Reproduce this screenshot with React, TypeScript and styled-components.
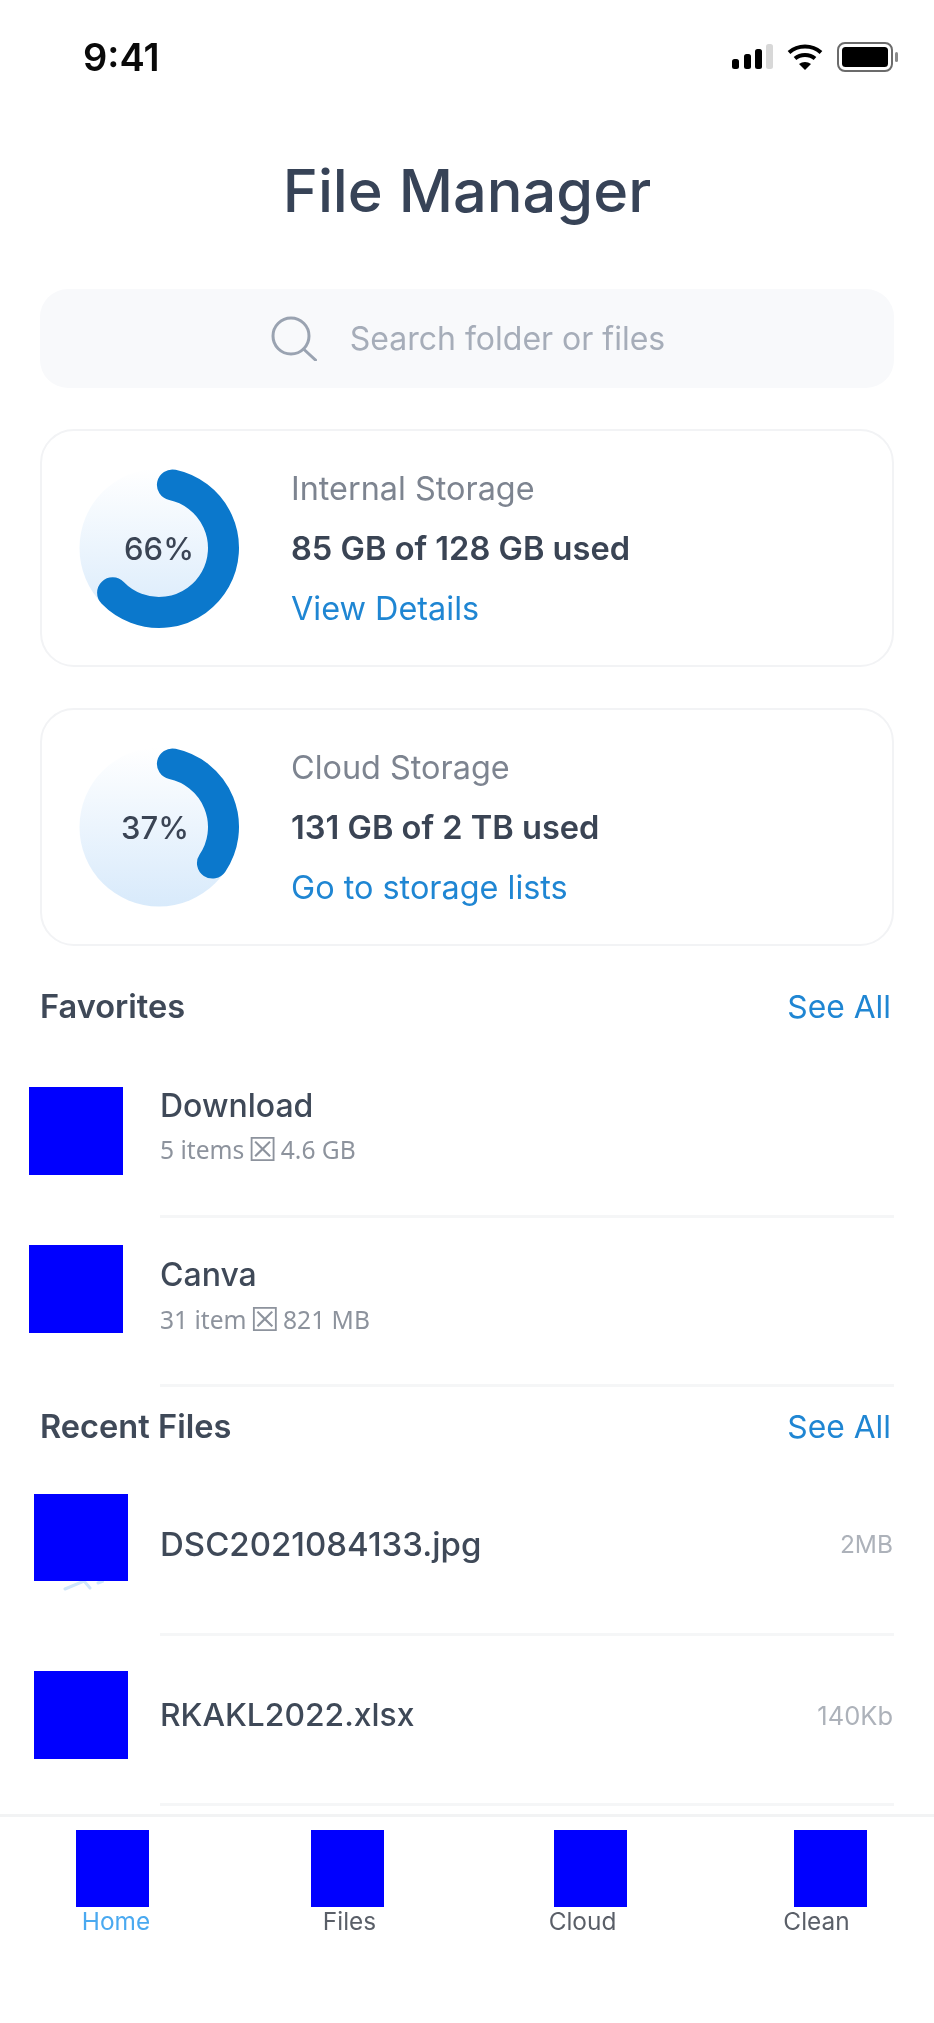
import React from "react";
import styled, { createGlobalStyle, css } from "styled-components";

const Global = createGlobalStyle`
  html, body { margin: 0; padding: 0; background: #fff; }
  body { font-family: "Inter", "Liberation Sans", sans-serif; }
`;

const soft = css`
  filter: blur(0.5px);
`;

const Page = styled.div`
  width: 934px;
  height: 2023px;
  overflow: hidden;
  display: flex;
  flex-direction: column;
  background: #fff;
  color: #374151;
`;

const StatusBar = styled.div`
  height: 110px;
  flex: none;
  display: flex;
  justify-content: space-between;
  align-items: flex-start;
  padding: 34px 35px 0 83px;
  box-sizing: border-box;
`;

const Time = styled.span`
  ${soft}
  font-size: 38px;
  font-weight: 600;
  line-height: 46px;
  color: #0a0a0a;
`;

const StatusIcons = styled.div`
  ${soft}
  display: flex;
  align-items: center;
  gap: 14px;
  padding-top: 8px;
`;

const Content = styled.div`
  flex: 1;
  padding: 0 40px;
  display: flex;
  flex-direction: column;
`;

const Title = styled.h1`
  ${soft}
  margin: 44px 0 63px;
  font-size: 59.5px;
  font-weight: 500;
  line-height: 72px;
  text-align: center;
  color: #374357;
`;

const SearchBox = styled.div`
  height: 99px;
  flex: none;
  border-radius: 28px;
  background: #f8f9fb;
  display: flex;
  align-items: center;
  justify-content: center;
  gap: 33px;
  padding-left: 2px;
  margin-bottom: 41px;
  svg { ${soft} }
`;

const SearchText = styled.span`
  ${soft}
  font-size: 32px;
  color: #a6adb9;
`;

const Card = styled.div`
  height: 238px;
  flex: none;
  box-sizing: border-box;
  border: 2px solid #f2f3f5;
  border-radius: 34px;
  display: flex;
  align-items: center;
  gap: 52px;
  padding-left: 37px;
  margin-bottom: ${(p: { $last?: boolean }) => (p.$last ? "40px" : "41px")};
`;

const Donut = styled.div`
  width: 160px;
  height: 160px;
  flex: none;
  display: grid;
  place-items: center;
`;

const DonutLayer = styled.svg`
  grid-area: 1 / 1;
  overflow: visible;
`;

const DonutValue = styled.span<{ $shift: number }>`
  ${soft}
  grid-area: 1 / 1;
  font-size: 31px;
  font-weight: 500;
  color: #3a4454;
  margin-right: ${(p) => p.$shift}px;
`;

const CardText = styled.div`
  display: flex;
  flex-direction: column;
  gap: 21px;
`;

const CardLabel = styled.span`
  ${soft}
  font-size: 32.4px;
  line-height: 39px;
  color: #7d8490;
`;

const CardValue = styled.span`
  ${soft}
  font-size: 32.6px;
  line-height: 39px;
  font-weight: 600;
  color: #3a4454;
`;

const Link = styled.a`
  ${soft}
  font-size: 32.4px;
  line-height: 39px;
  color: #1f86d3;
`;

const SectionHead = styled.div`
  height: 40px;
  flex: none;
  display: flex;
  justify-content: space-between;
  align-items: center;
  padding-right: 3px;
`;

const SectionTitle = styled.span`
  ${soft}
  font-size: 32.6px;
  font-weight: 600;
  color: #3f4958;
`;

const SeeAll = styled.a`
  ${soft}
  font-size: 31.8px;
  color: #1f86d3;
`;

const Row = styled.div<{ $top: number; $h: number; $bleed: number; $gap: number }>`
  display: flex;
  align-items: center;
  margin: ${(p) => p.$top}px 0 0 ${(p) => -p.$bleed}px;
  height: ${(p) => p.$h}px;
  flex: none;
  gap: ${(p) => p.$gap}px;
`;

const Block = styled.div`
  width: 94px;
  height: 100%;
  flex: none;
  background: #0000ff;
  position: relative;
`;

const BlockTail = styled.svg`
  ${soft}
  position: absolute;
  left: 28px;
  top: 100%;
`;

const Info = styled.div<{ $down?: number; $gap?: number }>`
  display: flex;
  flex-direction: column;
  gap: ${(p) => p.$gap ?? 9}px;
  flex: 1;
  margin-top: ${(p) => p.$down ?? 0}px;
`;

const ItemName = styled.span<{ $size?: number }>`
  ${soft}
  font-size: ${(p) => p.$size ?? 32}px;
  font-weight: 500;
  line-height: 36px;
  color: #3f4958;
`;

const ItemMeta = styled.span`
  ${soft}
  font-family: "Noto Sans", "DejaVu Sans", sans-serif;
  font-size: 24.6px;
  line-height: 32px;
  color: #8d939d;
`;

const MetaMark = styled.span`
  font-size: 33px;
  line-height: 0;
  margin: 0 -3px;
  vertical-align: -2px;
`;

const ItemSize = styled.span<{ $down?: number; $size?: number }>`
  ${soft}
  font-size: ${(p) => p.$size ?? 24.5}px;
  color: #adb2ba;
  margin-right: 1px;
  margin-top: ${(p) => p.$down ?? 0}px;
`;

const Divider = styled.div<{ $top: number }>`
  height: 3px;
  flex: none;
  margin: ${(p) => p.$top}px 0 0 120px;
  background: #f5f6f7;
`;

const Gap = styled.div<{ $h: number }>`
  height: ${(p) => p.$h}px;
  flex: none;
`;

const Nav = styled.nav`
  height: 209px;
  flex: none;
  box-sizing: border-box;
  border-top: 3px solid #f2f3f4;
  padding: 13px 0 0 76px;
  display: flex;
`;

const NavItem = styled.div<{ $left: number }>`
  width: 73px;
  flex: none;
  margin-left: ${(p) => p.$left}px;
  display: flex;
  flex-direction: column;
  align-items: center;
`;

const NavBlock = styled.div`
  width: 73px;
  height: 77px;
  background: #0000ff;
`;

const NavLabel = styled.span<{ $active?: boolean; $shift: number }>`
  ${soft}
  font-size: 24.4px;
  line-height: 28px;
  white-space: nowrap;
  margin-left: ${(p) => p.$shift * 2}px;
  color: ${(p) => (p.$active ? "#4aa9f0" : "#5a5f68")};
`;

const Signal = () => (
  <svg width="42" height="26" viewBox="0 0 42 26">
    <rect x="1" y="15" width="7" height="10" rx="2.5" fill="#000" />
    <rect x="13" y="10" width="7" height="15" rx="2.5" fill="#000" />
    <rect x="24" y="5" width="7" height="20" rx="2.5" fill="#000" />
    <rect x="35" y="0" width="7" height="25" rx="2.5" fill="#d8d8d8" />
  </svg>
);

const Wifi = () => (
  <svg width="36" height="27" viewBox="0 0 36 27" fill="none" stroke="#000" strokeWidth="4">
    <path d="M2 8.5C11 0.5 25 0.5 34 8.5" />
    <path d="M8 14.5C13.5 9.8 22.5 9.8 28 14.5" />
    <path d="M18 26L12 20C15.5 17.2 20.5 17.2 24 20Z" fill="#000" stroke="none" />
  </svg>
);

const Battery = () => (
  <svg width="62" height="30" viewBox="0 0 62 30">
    <rect x="1" y="1" width="54" height="28" rx="7" fill="none" stroke="#6b6b6b" strokeWidth="2" />
    <rect x="5" y="5" width="46" height="20" rx="3.5" fill="#000" />
    <rect x="58" y="10" width="3" height="10" rx="1.5" fill="#8a8a8a" />
  </svg>
);

const SearchGlyph = () => (
  <svg width="46" height="45" viewBox="0 0 46 45" fill="none" stroke="#9aa3b1" strokeWidth="3" strokeLinecap="round">
    <circle cx="20" cy="20" r="18" />
    <path d="M32.5 33L44.5 44" />
  </svg>
);

const arc = (r: number, from: number, to: number) => {
  const pt = (deg: number) => {
    const a = (deg * Math.PI) / 180;
    return `${(80 + r * Math.sin(a)).toFixed(2)} ${(80 - r * Math.cos(a)).toFixed(2)}`;
  };
  return `M${pt(from)}A${r} ${r} 0 ${to - from > 180 ? 1 : 0} 1 ${pt(to)}`;
};

const Ring = ({ id, end }: { id: string; end: number }) => (
  <DonutLayer width="160" height="160" viewBox="0 0 160 160">
    <defs>
      <linearGradient id={id} x1="0" y1="0" x2="0" y2="1">
        <stop offset="0" stopColor="#ffffff" />
        <stop offset="1" stopColor="#d8eafb" />
      </linearGradient>
    </defs>
    <circle cx="80" cy="80" r="79.5" fill={`url(#${id})`} />
    <path d={arc(64.5, 12, end)} fill="none" stroke="#0b78cc" strokeWidth="31" strokeLinecap="round" />
  </DonutLayer>
);

const StorageCard = (p: { id: string; end: number; pct: string; shift: number; label: string; value: string; link: string; last?: boolean }) => (
  <Card $last={p.last}>
    <Donut>
      <Ring id={p.id} end={p.end} />
      <DonutValue $shift={p.shift}>{p.pct}</DonutValue>
    </Donut>
    <CardText>
      <CardLabel>{p.label}</CardLabel>
      <CardValue>{p.value}</CardValue>
      <Link>{p.link}</Link>
    </CardText>
  </Card>
);

const navItems = [
  { label: "Home", left: 0, shift: 3.5, active: true },
  { label: "Files", left: 162, shift: 2 },
  { label: "Cloud", left: 170, shift: -8 },
  { label: "Clean", left: 167, shift: -14 },
];

export default function App() {
  return (
    <Page>
      <Global />
      <StatusBar>
        <Time>9:41</Time>
        <StatusIcons>
          <Signal />
          <Wifi />
          <Battery />
        </StatusIcons>
      </StatusBar>
      <Content>
        <Title>File Manager</Title>
        <SearchBox>
          <SearchGlyph />
          <SearchText>Search folder or files</SearchText>
        </SearchBox>
        <StorageCard id="g1" end={226} pct="66%" shift={0} label="Internal Storage" value="85 GB of 128 GB used" link="View Details" />
        <StorageCard id="g2" end={124} pct="37%" shift={8} label="Cloud Storage" value="131 GB of 2 TB used" link="Go to storage lists" last />
        <SectionHead>
          <SectionTitle>Favorites</SectionTitle>
          <SeeAll>See All</SeeAll>
        </SectionHead>
        <Row $top={61} $h={88} $bleed={11} $gap={37}>
          <Block />
          <Info $down={-8} $gap={10}>
            <ItemName>Download</ItemName>
            <ItemMeta>5 items <MetaMark>☒</MetaMark> 4.6 GB</ItemMeta>
          </Info>
        </Row>
        <Divider $top={40} />
        <Row $top={27} $h={88} $bleed={11} $gap={37}>
          <Block />
          <Info $down={15} $gap={11}>
            <ItemName>Canva</ItemName>
            <ItemMeta>31 item <MetaMark>☒</MetaMark> 821 MB</ItemMeta>
          </Info>
        </Row>
        <Divider $top={51} />
        <Gap $h={19} />
        <SectionHead>
          <SectionTitle>Recent Files</SectionTitle>
          <SeeAll>See All</SeeAll>
        </SectionHead>
        <Row $top={48} $h={87} $bleed={6} $gap={32}>
          <Block>
            <BlockTail width="42" height="10" viewBox="0 0 42 10" fill="none" stroke="#cfe6fa" strokeWidth="3" strokeLinecap="round">
              <path d="M3 8L22 0" />
              <path d="M22 0L28 7" />
              <path d="M36 2L41 0" />
            </BlockTail>
          </Block>
          <Info $down={12}>
            <ItemName $size={33}>DSC2021084133.jpg</ItemName>
          </Info>
          <ItemSize $down={12}>2MB</ItemSize>
        </Row>
        <Divider $top={52} />
        <Row $top={35} $h={88} $bleed={6} $gap={32}>
          <Block />
          <Info>
            <ItemName $size={31.8}>RKAKL2022.xlsx</ItemName>
          </Info>
          <ItemSize $size={25.5}>140Kb</ItemSize>
        </Row>
        <Divider $top={44} />
      </Content>
      <Nav>
        {navItems.map((n) => (
          <NavItem key={n.label} $left={n.left}>
            <NavBlock />
            <NavLabel $active={n.active} $shift={n.shift}>{n.label}</NavLabel>
          </NavItem>
        ))}
      </Nav>
    </Page>
  );
}
